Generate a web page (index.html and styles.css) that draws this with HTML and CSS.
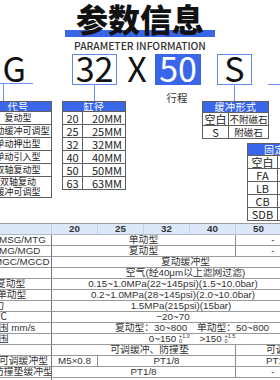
FILE: index.html
```html
<!DOCTYPE html>
<html lang="zh">
<head>
<meta charset="utf-8">
<title>参数信息</title>
<link rel="stylesheet" href="styles.css">
</head>
<body>
<div class="page">
  <header class="head">
    <h1 class="title"><span>参数信息</span></h1>
    <p class="sub">PARAMETER INFORMATION</p>
  </header>

  <div class="diagram">
    <div class="code mg">MG</div>
    <div class="line mg-h"></div>
    <div class="line mg-v"></div>

    <div class="code box b32">32</div>
    <div class="line v32"></div>

    <div class="code x">X</div>

    <div class="code box fill b50">50</div>
    <div class="tag">行程</div>

    <div class="code box bs">S</div>
    <div class="line vs"></div>
    <div class="line hr"></div>

    <div class="mini t-type">
      <div class="th">代号</div>
      <div>复动型</div>
      <div>复动缓冲可调型</div>
      <div>单动押出型</div>
      <div>单动引入型</div>
      <div>双轴复动型</div>
      <div class="two">双轴复动<br>缓冲可调型</div>
    </div>

    <div class="mini t-bore">
      <div class="th">缸径</div>
      <div>20</div><div class="mm">20MM</div>
      <div>25</div><div class="mm">25MM</div>
      <div>32</div><div class="mm">32MM</div>
      <div>40</div><div class="mm">40MM</div>
      <div>50</div><div class="mm">50MM</div>
      <div>63</div><div class="mm">63MM</div>
    </div>

    <div class="mini t-cush">
      <div class="th">缓冲形式</div>
      <div class="k">空白</div><div class="v">不附磁石</div>
      <div class="k">S</div><div class="v">附磁石</div>
    </div>

    <div class="mini t-mount">
      <div class="th">固定方式</div>
      <div class="k">空白</div><div class="v">基本型</div>
      <div class="k">FA</div><div class="v">法兰型</div>
      <div class="k">LB</div><div class="v">脚座型</div>
      <div class="k">CB</div><div class="v">后耳型</div>
      <div class="k">SDB</div><div class="v">双耳型</div>
    </div>
  </div>

  <div class="spec">
    <div class="c h"></div><div class="c h">20</div><div class="c h">25</div><div class="c h">32</div><div class="c h">40</div><div class="c h">50</div><div class="c h">63</div>

    <div class="c l i1">MSG/MTG</div><div class="c s4">单动型</div><div class="c s2">-</div>
    <div class="c l i1">MG/MGD</div><div class="c s4">复动型</div><div class="c s2">-</div>
    <div class="c l i6">MGC/MGCD</div><div class="c s6 rt">复动缓冲型</div>
    <div class="c l"></div><div class="c s6 rt">空气(经40μm以上滤网过滤)</div>
    <div class="c l i4">复动型</div><div class="c s6 lf">0.15~1.0MPa(22~145psi)(1.5~10.0bar)</div>
    <div class="c l i3">单动型</div><div class="c s6 lf">0.2~1.0MPa(28~145psi)(2.0~10.0bar)</div>
    <div class="c l i25">耐压力</div><div class="c s6">1.5MPa(215psi)(15bar)</div>
    <div class="c l i3">℃</div><div class="c s6 lf">−20~70</div>
    <div class="c l i11">范围 mm/s</div><div class="c s6 rt2">复动型：30~800　单动型：50~800</div>
    <div class="c l i11">范围</div><div class="c s6 rt2">0~150 <span class="tol"><span>+1.0</span><span>0</span></span>　&gt;150 <span class="tol"><span>+1.5</span><span>0</span></span></div>
    <div class="c l"></div><div class="c s4 mid">可调缓冲、防撞垫</div><div class="c s2 tail">可调缓冲</div>
    <div class="c l i1">可调缓冲型</div><div class="c">M5×0.8</div><div class="c s3">PT1/8</div><div class="c s2 tail">PT1/8</div>
    <div class="c l i6">防撞垫缓冲型</div><div class="c s4">PT1/8</div><div class="c s2">-</div>
    <div class="c l"></div><div class="c s6"></div>
  </div>
</div>
</body>
</html>
```

FILE: styles.css
```css
html, body {
  margin: 0;
  padding: 0;
  background: #ffffff;
}

body {
  width: 280px;
  height: 380px;
  overflow: hidden;
  font-family: "Noto Sans CJK SC", "Noto Sans", sans-serif;
  color: #222;
}

.page {
  width: 280px;
}

/* ---------- heading ---------- */
.head {
  height: 54px;
  text-align: center;
}

.title {
  margin: 0;
  padding-top: 1px;
  height: 37px;
  box-sizing: border-box;
  font-size: 32px;
  line-height: 35px;
  font-weight: 900;
  color: #111;
}

.title span {
  display: inline-block;
  height: 36px;
  padding: 0 11px;
  background: linear-gradient(to bottom, transparent 29px, #3a67ea 29px);
}

.sub {
  margin: 2px 0 0;
  font-size: 10.3px;
  line-height: 13px;
  font-weight: 500;
  color: #333;
}

/* ---------- code diagram ---------- */
.diagram {
  position: relative;
  height: 169px;
}

.code {
  position: absolute;
  top: 0;
  height: 31px;
  box-sizing: border-box;
  border: 1px solid transparent;
  font-size: 34px;
  line-height: 26px;
  text-align: center;
  color: #111;
}

.box {
  border-color: #6287ea;
}

.fill {
  background: #3a67ea;
  border-color: #3a67ea;
  color: #fff;
}

.mg {
  left: -40px;
  width: 67px;
  text-align: right;
}

.b32 { left: 72px; width: 45px; }
.x   { left: 124px; width: 26px; }
.b50 { left: 155px; width: 46px; }
.bs  { left: 217px; width: 35px; }

.tag {
  position: absolute;
  left: 157px;
  top: 37px;
  width: 40px;
  font-size: 10.5px;
  line-height: 14px;
  text-align: center;
  color: #333;
}

.line {
  position: absolute;
  background: #6f90ee;
}

.mg-h { left: 0; top: 29px; width: 33px; height: 1px; }
.mg-v { left: 3px; top: 29px; width: 1px; height: 18px; }
.v32  { left: 94px; top: 31px; width: 1px; height: 16px; }
.vs   { left: 234px; top: 31px; width: 1px; height: 16px; }
.hr   { left: 268px; top: 30px; width: 20px; height: 1px; }

/* mini tables */
.mini {
  position: absolute;
  display: grid;
  gap: 1px;
  padding: 1px;
  background: #5e5e5e;
  color: #222;
}

.mini > div {
  background: #fff;
  text-align: center;
  white-space: nowrap;
  overflow: hidden;
}

.mini > .th {
  grid-column: 1 / -1;
  background: #3a67ea;
  color: #fff;
  font-size: 10px;
  letter-spacing: 0.5px;
}

.t-type {
  left: -16px;
  top: 47px;
  width: 66px;
  grid-template-columns: 1fr;
  grid-template-rows: 9px repeat(5, 12px) 20px;
  font-size: 9px;
  line-height: 12px;
}

.t-type .th { line-height: 9px; }
.t-type .two { line-height: 10px; white-space: normal; }

.t-bore {
  left: 62px;
  top: 47px;
  grid-template-columns: 19px 42px;
  grid-template-rows: 9px repeat(6, 12px);
  font-size: 11px;
  line-height: 12px;
}

.t-bore .th { line-height: 9px; }
.t-bore .mm { text-align: right; padding-right: 3px; }

.t-cush {
  left: 202px;
  top: 47px;
  grid-template-columns: 25px 39px;
  grid-template-rows: 10px 12px 12px;
  line-height: 12px;
}

.t-cush .th { line-height: 10px; }

.t-mount {
  left: 247px;
  top: 89px;
  grid-template-columns: 29px 44px;
  grid-template-rows: 11px repeat(5, 12px);
  line-height: 12px;
}

.t-mount .th { line-height: 11px; }

.k { font-size: 11px; }
.v { font-size: 9.5px; }

/* ---------- spec table ---------- */
.spec {
  display: grid;
  width: 311px;
  grid-template-columns: 52px repeat(5, 46px) 29px;
  grid-auto-rows: 11px;
  border-top: 1px solid #9a9a9a;
  font-family: "Liberation Sans", "Noto Sans CJK SC", sans-serif;
  font-size: 9.8px;
  color: #333;
}

.c {
  box-sizing: border-box;
  border-right: 1px solid #8c8c8c;
  border-bottom: 1px solid #9a9a9a;
  line-height: 10px;
  text-align: center;
  white-space: nowrap;
  overflow: hidden;
}

.h {
  background: #dce8f7;
  border-right-color: #c3d3ea;
  border-bottom-color: #aab8cc;
  font-weight: 700;
  color: #333;
}

.l {
  text-align: left;
  border-right-color: #777;
}

.s2 { grid-column: span 2; }
.s3 { grid-column: span 3; }
.s4 { grid-column: span 4; }
.s6 { grid-column: span 6; }

.lf  { padding-right: 16px; }
.rt  { padding-left: 9px; }
.rt2 { padding-left: 22px; }
.mid { padding-left: 12px; }

.tail {
  text-align: left;
  padding-left: 30px;
}

.i1  { text-indent: -1px; }
.i3  { text-indent: -3px; }
.i4  { text-indent: -4px; }
.i6  { text-indent: -6px; }
.i11 { text-indent: -11px; }
.i25 { text-indent: -25px; }

.tol {
  display: inline-flex;
  flex-direction: column;
  vertical-align: top;
  font-size: 5.5px;
  line-height: 5px;
  text-align: left;
}
```
